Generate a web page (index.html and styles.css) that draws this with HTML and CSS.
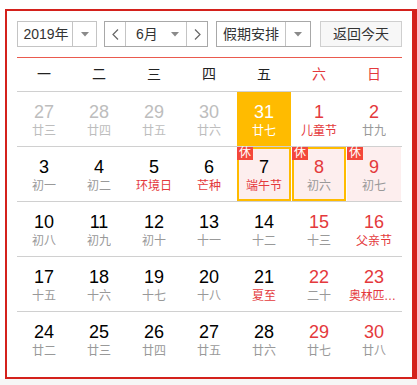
FILE: index.html
```html
<!DOCTYPE html>
<html lang="zh-CN">
<head>
<meta charset="utf-8">
<title>万年历</title>
<link rel="stylesheet" href="styles.css">
</head>
<body>
<div class="page">
  <div class="calendar">
    <div class="toolbar">
      <div class="select year">
        <span class="sel-text">2019年</span>
        <span class="sel-arrow"><svg width="8" height="5" viewBox="0 0 8 5"><path d="M0 0H8L4 4.5Z" fill="#8a8a8a"/></svg></span>
      </div>
      <div class="month-group">
        <span class="nav-btn"><svg width="7" height="11" viewBox="0 0 7 11"><path d="M6 0.5L1 5.5L6 10.5" fill="none" stroke="#666" stroke-width="1.2"/></svg></span>
        <span class="month-sel">
          <span class="month-text">6月</span>
          <svg width="8" height="5" viewBox="0 0 8 5"><path d="M0 0H8L4 4.5Z" fill="#8a8a8a"/></svg>
        </span>
        <span class="nav-btn next"><svg width="7" height="11" viewBox="0 0 7 11"><path d="M1 0.5L6 5.5L1 10.5" fill="none" stroke="#666" stroke-width="1.2"/></svg></span>
      </div>
      <div class="select vacation">
        <span class="sel-text">假期安排</span>
        <span class="sel-arrow"><svg width="8" height="5" viewBox="0 0 8 5"><path d="M0 0H8L4 4.5Z" fill="#8a8a8a"/></svg></span>
      </div>
      <button class="today-btn">返回今天</button>
    </div>

    <div class="weekdays">
      <span>一</span><span>二</span><span>三</span><span>四</span><span>五</span><span class="red">六</span><span class="red">日</span>
    </div>

    <div class="week">
      <div class="day muted"><span class="num">27</span><span class="lunar">廿三</span></div>
      <div class="day muted"><span class="num">28</span><span class="lunar">廿四</span></div>
      <div class="day muted"><span class="num">29</span><span class="lunar">廿五</span></div>
      <div class="day muted"><span class="num">30</span><span class="lunar">廿六</span></div>
      <div class="day today"><span class="num">31</span><span class="lunar">廿七</span></div>
      <div class="day weekend fest"><span class="num">1</span><span class="lunar">儿童节</span></div>
      <div class="day weekend"><span class="num">2</span><span class="lunar">廿九</span></div>
    </div>
    <div class="week">
      <div class="day"><span class="num">3</span><span class="lunar">初一</span></div>
      <div class="day"><span class="num">4</span><span class="lunar">初二</span></div>
      <div class="day fest"><span class="num">5</span><span class="lunar">环境日</span></div>
      <div class="day fest"><span class="num">6</span><span class="lunar">芒种</span></div>
      <div class="day off-day picked fest"><span class="rest">休</span><span class="num">7</span><span class="lunar">端午节</span></div>
      <div class="day off-day picked weekend"><span class="rest">休</span><span class="num">8</span><span class="lunar">初六</span></div>
      <div class="day off-day weekend"><span class="rest">休</span><span class="num">9</span><span class="lunar">初七</span></div>
    </div>
    <div class="week">
      <div class="day"><span class="num">10</span><span class="lunar">初八</span></div>
      <div class="day"><span class="num">11</span><span class="lunar">初九</span></div>
      <div class="day"><span class="num">12</span><span class="lunar">初十</span></div>
      <div class="day"><span class="num">13</span><span class="lunar">十一</span></div>
      <div class="day"><span class="num">14</span><span class="lunar">十二</span></div>
      <div class="day weekend"><span class="num">15</span><span class="lunar">十三</span></div>
      <div class="day weekend fest"><span class="num">16</span><span class="lunar">父亲节</span></div>
    </div>
    <div class="week">
      <div class="day"><span class="num">17</span><span class="lunar">十五</span></div>
      <div class="day"><span class="num">18</span><span class="lunar">十六</span></div>
      <div class="day"><span class="num">19</span><span class="lunar">十七</span></div>
      <div class="day"><span class="num">20</span><span class="lunar">十八</span></div>
      <div class="day fest"><span class="num">21</span><span class="lunar">夏至</span></div>
      <div class="day weekend"><span class="num">22</span><span class="lunar">二十</span></div>
      <div class="day weekend fest"><span class="num">23</span><span class="lunar long">奥林匹克日</span></div>
    </div>
    <div class="week">
      <div class="day"><span class="num">24</span><span class="lunar">廿二</span></div>
      <div class="day"><span class="num">25</span><span class="lunar">廿三</span></div>
      <div class="day"><span class="num">26</span><span class="lunar">廿四</span></div>
      <div class="day"><span class="num">27</span><span class="lunar">廿五</span></div>
      <div class="day"><span class="num">28</span><span class="lunar">廿六</span></div>
      <div class="day weekend"><span class="num">29</span><span class="lunar">廿七</span></div>
      <div class="day weekend"><span class="num">30</span><span class="lunar">廿八</span></div>
    </div>
  </div>
  <div class="strip"></div>
</div>
</body>
</html>
```

FILE: styles.css
```css
* { box-sizing: border-box; }

html, body {
  margin: 0;
  padding: 0;
  background: #fff;
}

body {
  font-family: "Liberation Sans", "Noto Sans CJK SC", sans-serif;
  color: #333;
}

.page {
  padding: 9px 0 0 5px;
  background: #fff;
}

.calendar {
  width: 412px;
  height: 370px;
  border-style: solid;
  border-color: #d4211c;
  border-width: 2px 5px 2px 2px;
  padding: 10px 10px 11px 10px;
  background: #fff;
}

.strip {
  height: 10px;
  margin-left: -5px;
  background: #f6f6f6;
}

/* toolbar */
.toolbar {
  display: flex;
  height: 26px;
  margin-bottom: 10px;
  font-size: 14px;
  line-height: 24px;
  color: #333;
}

.select {
  display: flex;
  border: 1px solid #c4c4c4;
  height: 26px;
  background: #fff;
}

.sel-text {
  text-align: center;
  border-right: 1px solid #c4c4c4;
}

.sel-arrow {
  flex: 1;
  display: flex;
  align-items: center;
  justify-content: center;
}

.year { width: 80px; }
.year .sel-text { flex: 0 0 55px; padding-left: 2px; }

.month-group {
  display: flex;
  width: 104px;
  height: 26px;
  margin-left: 7px;
  border: 1px solid #a8a8a8;
}

.nav-btn {
  width: 21px;
  display: flex;
  align-items: center;
  justify-content: center;
  border-right: 1px solid #c4c4c4;
  background: #fff;
}

.nav-btn.next {
  border-right: none;
  border-left: 1px solid #c4c4c4;
  flex: 1;
}

.month-sel {
  width: 60px;
  display: flex;
  align-items: center;
  padding-left: 10px;
}

.month-text { width: 35px; }

.vacation {
  width: 95px;
  margin-left: 8px;
  border-color: #a8a8a8;
}
.vacation .sel-text { flex: 0 0 69px; }

.today-btn {
  margin-left: auto;
  width: 82px;
  height: 26px;
  border: 1px solid #cfcfcf;
  background: #f7f7f7;
  font: inherit;
  font-size: 14px;
  color: #333;
  padding: 0;
  line-height: 24px;
}

/* weekday header */
.weekdays {
  display: grid;
  grid-template-columns: repeat(7, 55px);
  height: 35px;
  border-top: 1px solid #ea5a4e;
  border-bottom: 1px solid #d0d0d0;
  font-size: 14px;
  line-height: 32px;
  color: #222;
}

.weekdays span {
  text-align: center;
  padding-right: 1px;
}

.weekdays .red { color: #e4393c; }

/* weeks */
.week {
  display: grid;
  grid-template-columns: repeat(7, 55px);
  height: 55px;
  border-bottom: 1px solid #d0d0d0;
}

.week:last-child { border-bottom: none; }

.day {
  position: relative;
  margin-right: 1px;
  height: 54px;
  display: flex;
  flex-direction: column;
  align-items: center;
  padding: 10px 0 0;
}

.num {
  font-size: 18px;
  line-height: 20px;
  color: #000;
}

.lunar {
  margin-top: 1px;
  font-size: 12px;
  line-height: 16px;
  color: #999;
  max-width: 100%;
  white-space: nowrap;
  overflow: hidden;
  text-overflow: ellipsis;
}

.lunar.long {
  width: 50px;
  max-width: none;
  letter-spacing: -0.3px;
}

.muted .num, .muted .lunar { color: #bdbdbd; }

.weekend .num { color: #e4393c; }
.fest .lunar { color: #e4393c; }

.today { background: #ffbb00; }
.today .num, .today .lunar { color: #fff; }

.off-day { background: #fdeeee; }

.picked { box-shadow: inset 0 0 0 2px #ffbb00; }

.rest {
  position: absolute;
  top: 0;
  left: 0;
  width: 16px;
  height: 13px;
  background: #f4473a;
  color: #fff;
  font-size: 12px;
  line-height: 13px;
  text-align: center;
}
```
